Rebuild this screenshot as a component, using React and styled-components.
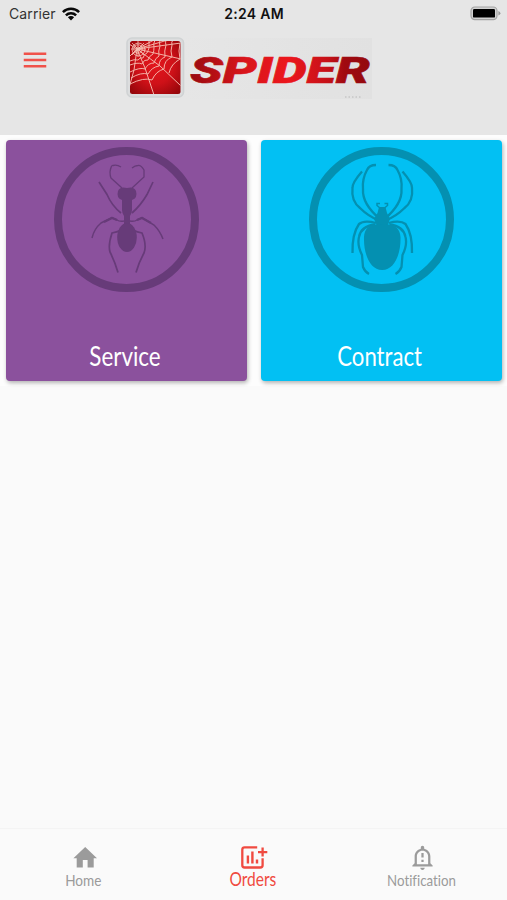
import React from 'react';
import styled, { createGlobalStyle } from 'styled-components';
import { MdMenu, MdOutlineNotificationImportant } from 'react-icons/md';

const GlobalStyle = createGlobalStyle`
  * {
    box-sizing: border-box;
  }
  body {
    margin: 0;
    background: #fafafa;
    font-family: Lato, 'Open Sans', sans-serif;
    font-variant-ligatures: none;
  }
`;

const Screen = styled.div`
  display: flex;
  flex-direction: column;
  width: 100%;
  height: 900px;
  overflow: hidden;
  background: #fafafa;
`;
const Header = styled.header`
  height: 135px;
  background: #e6e6e6;
`;
const StatusBar = styled.div`
  display: grid;
  grid-template-columns: 1fr auto 1fr;
  align-items: center;
  height: 27px;
  padding: 0 6px 0 9px;
  color: #111;
  font-family: Inter, sans-serif;
  font-size: 14px;
  svg {
    display: block;
  }
`;
const Carrier = styled.div`
  display: flex;
  align-items: center;
  gap: 6px;
  color: #333;
  letter-spacing: 0.1px;
`;
const Clock = styled.div`
  margin-right: 2px;
  font-weight: 600;
  font-size: 14px;
  letter-spacing: 0.3px;
`;
const BatteryWrapper = styled.div`
  display: flex;
  justify-content: flex-end;
`;
const AppBar = styled.div`
  display: flex;
  align-items: flex-start;
  padding: 10px 0 0 20px;
`;
const MenuButton = styled.button`
  width: 30px;
  height: 30px;
  margin: 8px 75px 0 0;
  padding: 0;
  border: none;
  background: none;
  color: #f0524a;
  svg {
    display: block;
  }
`;
const Content = styled.main`
  flex: 1;
`;
const Cards = styled.div`
  display: grid;
  grid-template-columns: 241px 241px;
  gap: 14px;
  padding: 5px 5px 5px 6px;
  background: #fdfdfd;
`;
const Card = styled.div`
  display: flex;
  flex-direction: column;
  align-items: center;
  height: 241px;
  padding-top: 7px;
  border-radius: 4px;
  background: ${(props) => props.$color};
  box-shadow: 1px 2px 4px rgba(0, 0, 0, 0.3);
  svg {
    display: block;
  }
`;
const CardTitle = styled.div`
  margin: 48px 4px 0 0;
  color: #fff;
  font-size: 27px;
  line-height: 32px;
  transform: scaleX(${(props) => props.$stretch});
`;
const TabBar = styled.nav`
  display: grid;
  grid-template-columns: repeat(3, 1fr);
  height: 72px;
  border-top: 1px solid #f4f4f4;
  background: #fafafa;
`;
const Tab = styled.div`
  display: flex;
  flex-direction: column;
  align-items: center;
  padding-top: 15px;
  color: ${(props) => (props.$active ? '#f04a40' : '#9b9b9b')};
  svg {
    display: block;
  }
`;
const TabLabel = styled.div`
  margin: ${(props) => (props.$active ? '-3px' : '-1px')} 2px 0 0;
  font-size: ${(props) => (props.$active ? '18.5px' : '16px')};
  line-height: 20px;
  white-space: nowrap;
  transform: scaleX(${(props) => props.$stretch});
`;

function Wifi() {
  return (
    <svg width='18' height='14' viewBox='0 0 18 14'>
      <g fill='none' stroke='#080808' strokeWidth='2.5'>
        <path d='M0.9 5.2a11.5 11.5 0 0 1 16.2 0' />
        <path d='M3.9 8.4a7.2 7.2 0 0 1 10.2 0' />
      </g>
      <path d='M5.9 10.3a4.4 4.4 0 0 1 6.2 0L9 13.5z' fill='#080808' />
    </svg>
  );
}

function Battery() {
  return (
    <svg width='31' height='15' viewBox='0 0 31 15'>
      <rect x='1' y='1' width='26' height='12.6' rx='3.8' fill='#d2d2d2' stroke='#a3a3a3' strokeWidth='1.2' />
      <rect x='3' y='3' width='22' height='8.6' rx='1.2' fill='#000' />
      <path d='M28.4 5v4.6q2-.8 2-2.3T28.4 5z' fill='#999' />
    </svg>
  );
}

function HomeIcon() {
  return (
    <svg width='27' height='27' viewBox='0 0 27 27' fill='currentColor'>
      <path d='M14.2 3L26 14.2H22.7V23.5H16.6V16H11.8V23.5H5.7V14.2H2.4z' />
    </svg>
  );
}

function OrdersIcon() {
  return (
    <svg width='28' height='28' viewBox='0 0 28 28' fill='none' stroke='currentColor'>
      <path
        d='M17.2 3.4H4.6Q2.3 3.4 2.3 5.7V21.2Q2.3 23.5 4.6 23.5H20.3Q22.6 23.5 22.6 21.2V14.3'
        strokeWidth='2.3'
      />
      <path d='M7.9 11.5V19.500M12.4 7.5V19.500M17 15.5V19.500' strokeWidth='2.4' />
      <path d='M22.6 3.6V12.6M18 8.2H27.3' strokeWidth='2.3' />
    </svg>
  );
}

function Logo() {
  return (
    <svg width='248' height='62' viewBox='125 37 248 62'>
      <defs>
        <radialGradient id='tile' cx='50%' cy='45%' r='72%'>
          <stop offset='0' stopColor='#e3161d' />
          <stop offset='0.5' stopColor='#cf1118' />
          <stop offset='1' stopColor='#900509' />
        </radialGradient>
        <linearGradient id='word' gradientUnits='userSpaceOnUse' x1='189' y1='0' x2='370' y2='0'>
          <stop offset='0' stopColor='#980a10' />
          <stop offset='0.3' stopColor='#d8151b' />
          <stop offset='0.55' stopColor='#ec171d' />
          <stop offset='0.77' stopColor='#c51118' />
          <stop offset='0.86' stopColor='#a00a10' />
          <stop offset='1' stopColor='#93090e' />
        </linearGradient>
        <linearGradient id='paper' x1='0' x2='1'>
          <stop offset='0' stopColor='#e6e6e6' />
          <stop offset='1' stopColor='#e1e1e1' />
        </linearGradient>
        <clipPath id='tileClip'>
          <rect x='130' y='41' width='50.5' height='53' rx='2.5' />
        </clipPath>
      </defs>
      <rect x='182' y='38' width='190' height='61' fill='url(#paper)' />
      <rect x='127' y='38' width='56.5' height='59' rx='5' fill='#dcddde' stroke='#d0d3d4' strokeWidth='1.6' />
      <rect x='130' y='41' width='50.5' height='53' rx='2.5' fill='url(#tile)' />
      <g clipPath='url(#tileClip)' fill='none' stroke='#f3b0a5' strokeWidth='1'>
        <path d='M137 49L181 43M137 49L181 59M137 49L160 66L181 86M137 49L145 68L154 95M137 49L134 70L129 88M137 49L129 57M137 49L129 44M137 49L154 40M137 49L168 40' />
        <path d='M149 40q0 4 0 8q-1 3-2 5q-3 1-4 5q-3-1-5 2q-4-1-8 1' />
        <path d='M155 40q-2 4-1 7q0 4-1 7q-4 2-5 6q-4-1-6 4q-4-2-12 1' />
        <path d='M160 40q-1 3 0 6q-2 5-1 10q-4 2-5 7q-6 0-9 6q-5-2-15 3' />
        <path d='M166 40q-1 3 0 5q-2 6-1 12q-6 2-6 9q-7 1-11 8q-7-2-17 4' />
        <path d='M173 40q-2 2-1 5q-2 6 0 12q-8 3-8 12q-8 2-12 11q-8-3-22 4' />
        <path d='M180 43q-2 8 0 16q-9 5-11 14' />
      </g>
      <g fill='none' stroke='#f5c3b6' strokeWidth='0.8'>
        <circle cx='138' cy='49' r='2' />
        <circle cx='138' cy='49' r='4.2' />
        <circle cx='138.5' cy='49.5' r='6.4' />
        <path d='M132 43l12 12M144 43l-12 12M138 41v16M131 49h15' />
      </g>
      <text
        x='190'
        y='83'
        fill='url(#word)'
        fontFamily='Roboto, sans-serif'
        fontSize='36'
        fontWeight='900'
        fontStyle='italic'
        stroke='url(#word)'
        strokeWidth='0.6'
        textLength='180'
        lengthAdjust='spacingAndGlyphs'
      >
        SPIDER
      </text>
      <path d='M345 97h17' stroke='#b8b8b8' strokeWidth='1' strokeDasharray='1.5 2' />
    </svg>
  );
}

function Ant() {
  return (
    <svg width='145' height='145' viewBox='1 0 145 145' fill='none' stroke='#673b79'>
      <circle cx='73.5' cy='72.5' r='68.5' strokeWidth='8' />
      <path d='M69 41L58 31Q57 29 57 25Q58 18 60 18.5Q64 17.5 68 20' strokeWidth='1.3' />
      <path d='M79 41L91 30V23Q88 18 85 18.5Q82 18.5 79 21' strokeWidth='1.3' />
      <path d='M46 35L54 47.500Q59 59 68 66' strokeWidth='1.7' />
      <path d='M100 35L94 47.500Q88 58 79 66' strokeWidth='1.7' />
      <path d='M71 74Q67 75 64 73L59 70.5L48 76Q41 82 39 91' strokeWidth='1.5' />
      <path d='M77 74Q81 75 84 73L89 70.5L101 78Q107 84 110 92' strokeWidth='1.5' />
      <path d='M64 73L59 71L51 75M84 73L89 71L98 76' strokeWidth='2.1' />
      <path d='M72 80Q69 84 59 86Q55 98 57 105Q62 115 65 125.5' strokeWidth='1.7' />
      <path d='M76 80Q79 84 89 86Q94 98 91 106Q86 115 83 125.5' strokeWidth='1.7' />
      <g fill='#673b79' stroke='none'>
        <path d='M74 41Q81 39 83 44Q85 51 79 53V63Q79 66 77 69V79H71V69Q69 66 69 63V53Q63 51 65 44Q67 39 74 41z' />
        <ellipse cx='74' cy='90.5' rx='9.8' ry='14.6' />
      </g>
    </svg>
  );
}

// the spider is symmetric, so the limbs of one side are mirrored
function Spider() {
  const limbs = (
    <>
      <path d='M54 24.5Q44 36 44.5 41Q43 54 52 61Q60 69 70 73' />
      <path d='M68 18Q61 18 59 23Q54 32 55 42Q54 57 72 72' />
      <path d='M68 76Q56 73 51 77Q44 87 44.5 106' />
      <path d='M67 77.5Q53 79 51 90Q49 98 54 108L55 120Q57 125 61 127' />
    </>
  );
  return (
    <svg width='145' height='145' viewBox='1 0 145 145' fill='none' stroke='#0490b1'>
      <circle cx='73.5' cy='72.5' r='68.5' strokeWidth='8' />
      <g strokeWidth='2.3'>
        {limbs}
        <g transform='matrix(-1 0 0 1 148.5 0)'>{limbs}</g>
      </g>
      <path d='M72 61L69 58.5V56.5H72M76.500 61L79.500 58.5V56.5H76.5' strokeWidth='1.5' />
      <g fill='#0490b1' stroke='none'>
        <path d='M71 60H77.5L79 66L82 72L79 80H69.5L66 72L69.5 66z' />
        <path d='M74.2 77.5C86 76 92 81 92.500 90C93 106 87 123 74.2 123S55.5 106 56 90C56.500 81 62 76 74.2 77.5z' />
      </g>
    </svg>
  );
}

export default function App() {
  return (
    <>
      <GlobalStyle />
      <Screen>
        <Header>
          <StatusBar>
            <Carrier>
              Carrier
              <Wifi />
            </Carrier>
            <Clock>2:24 AM</Clock>
            <BatteryWrapper>
              <Battery />
            </BatteryWrapper>
          </StatusBar>
          <AppBar>
            <MenuButton aria-label='Menu'>
              <MdMenu size={30} />
            </MenuButton>
            <Logo />
          </AppBar>
        </Header>
        <Content>
          <Cards>
            <Card $color='#8b519d'>
              <Ant />
              <CardTitle $stretch={0.83}>Service</CardTitle>
            </Card>
            <Card $color='#02c0f3'>
              <Spider />
              <CardTitle $stretch={0.82}>Contract</CardTitle>
            </Card>
          </Cards>
        </Content>
        <TabBar>
          <Tab>
            <HomeIcon />
            <TabLabel $stretch={0.85}>Home</TabLabel>
          </Tab>
          <Tab $active>
            <OrdersIcon />
            <TabLabel $active $stretch={0.84}>
              Orders
            </TabLabel>
          </Tab>
          <Tab>
            <MdOutlineNotificationImportant size={27} />
            <TabLabel $stretch={0.83}>Notification</TabLabel>
          </Tab>
        </TabBar>
      </Screen>
    </>
  );
}
